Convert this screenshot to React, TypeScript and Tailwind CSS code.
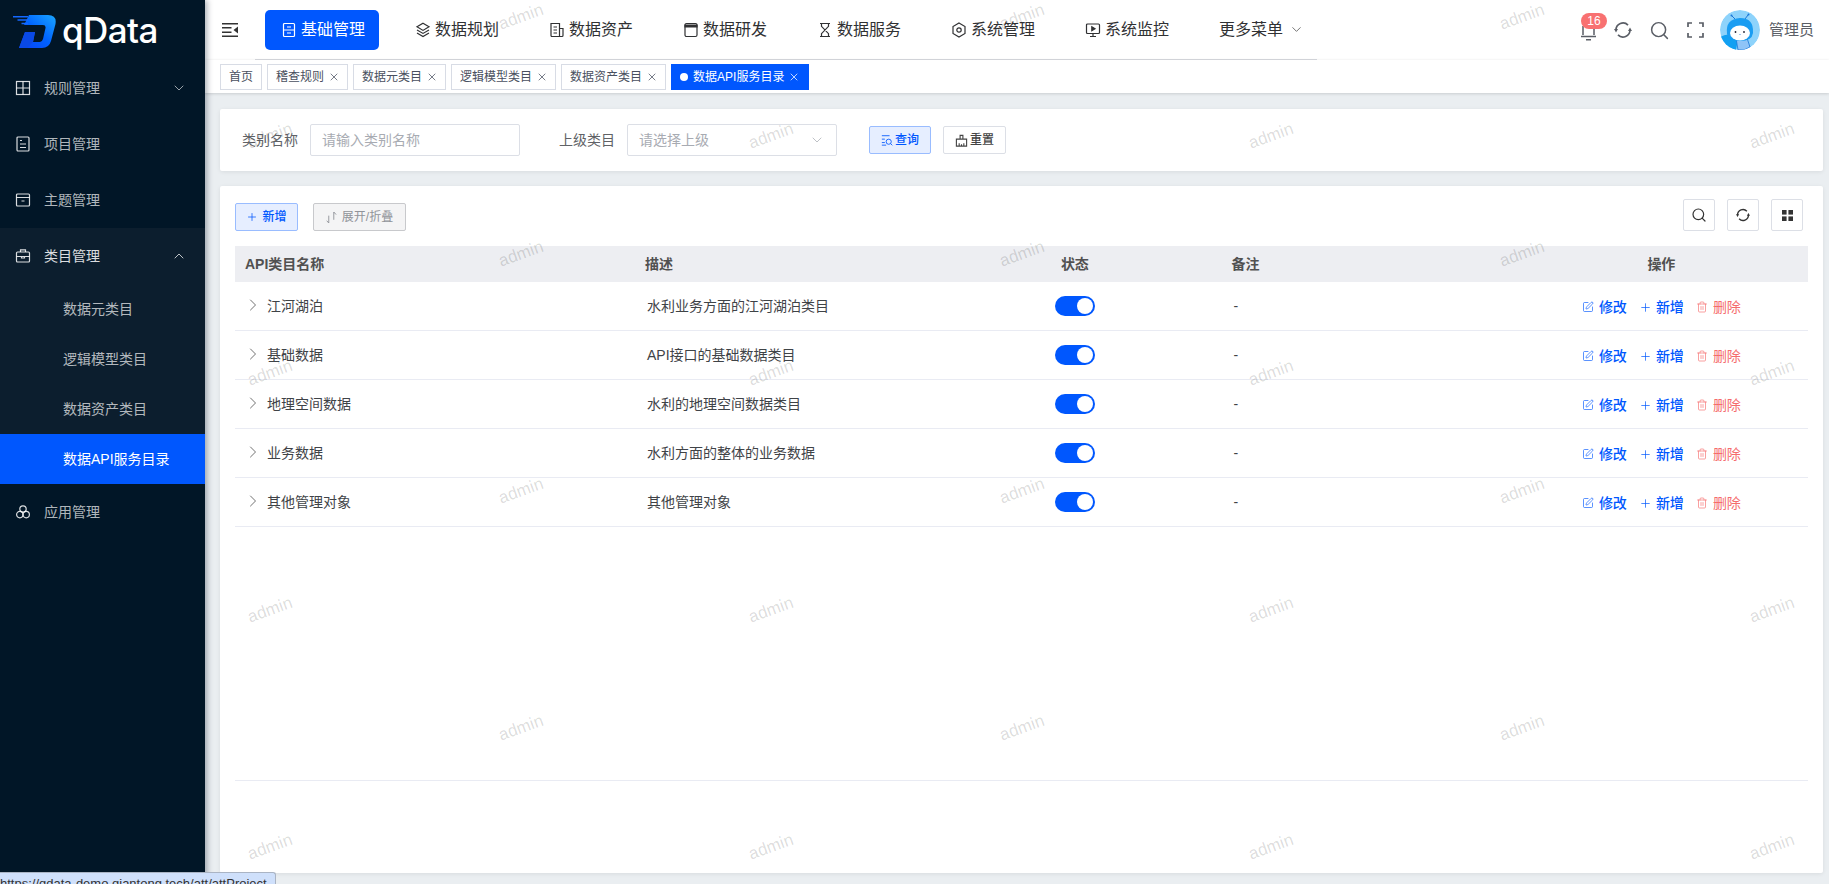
import { ChevronDown, ChevronRight, ChevronUp, Plus, Search, SquarePen, Trash2, X } from 'lucide-react';
import type { ReactNode } from 'react';

type IconProps = { className?: string };

const Svg = ({ className, children }: IconProps & { children: ReactNode }) => (
  <svg viewBox="0 0 16 16" fill="none" stroke="currentColor" strokeWidth="1.2" className={className}>
    {children}
  </svg>
);

const GridIcon = ({ className }: IconProps) => (
  <Svg className={className}>
    <rect x="1.500" y="1.500" width="13" height="13" />
    <path d="M8 1.500v13M1.500 8h13" />
  </Svg>
);
const DocIcon = ({ className }: IconProps) => (
  <Svg className={className}>
    <rect x="2" y="1" width="12" height="14" rx="1" />
    <path d="M5 4.500h2M5 8h6M5 11.500h6" />
  </Svg>
);
const BoxIcon = ({ className }: IconProps) => (
  <Svg className={className}>
    <rect x="1.500" y="2" width="13" height="12" rx="1" />
    <path d="M1.500 5.500h13M6.500 9h3" />
  </Svg>
);
const CaseIcon = ({ className }: IconProps) => (
  <Svg className={className}>
    <rect x="1.500" y="4" width="13" height="10" rx="1" />
    <path d="M5.500 4V1.800h5V4M1.500 8.500h13M6.500 8.500v1.500h3V8.500" />
  </Svg>
);
const AppIcon = ({ className }: IconProps) => (
  <Svg className={className}>
    <circle cx="8" cy="5" r="3.200" />
    <circle cx="4.800" cy="10.600" r="3.200" />
    <circle cx="11.200" cy="10.600" r="3.200" />
  </Svg>
);
const BaseIcon = ({ className }: IconProps) => (
  <Svg className={className}>
    <rect x="2.500" y="1.500" width="11" height="13" rx="1" />
    <path d="M2.500 8h11M6 5h4M6 11h4" />
  </Svg>
);
const LayerIcon = ({ className }: IconProps) => (
  <Svg className={className}>
    <path d="M8 1.200 14 4.800 8 8.400 2 4.800Z" />
    <path d="M2 8 8 11.400 14 8M2 11 8 14.600 14 11" />
  </Svg>
);
const AssetIcon = ({ className }: IconProps) => (
  <Svg className={className}>
    <path d="M2 1.500h8.500v13H3a1 1 0 0 1-1-1Z" />
    <path d="M10.500 6.500h3.500v7a1 1 0 0 1-1 1h-2.500M4.500 5h3.500M4.500 8h3.500M4.500 11h3.500" />
  </Svg>
);
const DevIcon = ({ className }: IconProps) => (
  <Svg className={className}>
    <rect x="2" y="1.500" width="12" height="13" rx="1.500" />
    <path d="M2 3h12v2H2Z" fill="currentColor" />
  </Svg>
);
const GlassIcon = ({ className }: IconProps) => (
  <Svg className={className}>
    <path d="M3 1.500h10M3 14.500h10M4.500 1.500v2.800L11.500 11.700v2.800M11.500 1.500v2.800L4.500 11.700v2.800" />
  </Svg>
);
const HexIcon = ({ className }: IconProps) => (
  <Svg className={className}>
    <path d="M8 1 14 4.500v7L8 15 2 11.500v-7Z" />
    <circle cx="8" cy="8" r="2.200" />
  </Svg>
);
const MonitorIcon = ({ className }: IconProps) => (
  <Svg className={className}>
    <rect x="1.500" y="2" width="13" height="9.500" rx="1" />
    <path d="M8 11.500V14M5 14.500h6" />
    <path d="M6.800 4.800 10 6.800 6.800 8.700Z" fill="currentColor" />
  </Svg>
);
const CollapseIcon = ({ className }: IconProps) => (
  <svg viewBox="0 0 16 14" fill="currentColor" className={className}>
    <path d="M0 0h16v1.500H0ZM0 4h9.500v1.500H0ZM0 8.500h9.500V10H0ZM0 12.500h16V14H0ZM16 3.500v7L11.500 7Z" />
  </svg>
);
const BellIcon = ({ className }: IconProps) => (
  <svg viewBox="0 0 17 18" fill="none" stroke="currentColor" strokeWidth="1.500" className={className}>
    <path d="M3 3v9M14 3v9M1 13.500h15M6 16.800h5" />
  </svg>
);
const RefreshIcon = ({ className }: IconProps) => (
  <svg viewBox="0 0 18 18" fill="none" stroke="currentColor" strokeWidth="1.700" className={className}>
    <path d="M14 4.100A7 7 0 0 0 2 9M4 13.900A7 7 0 0 0 16 9" />
    <path d="M0 8h4l-2 3.500ZM18 10h-4l2-3.500Z" fill="currentColor" stroke="none" />
  </svg>
);
const FullIcon = ({ className }: IconProps) => (
  <svg viewBox="0 0 17 16" fill="none" stroke="currentColor" strokeWidth="1.700" className={className}>
    <path d="M1 5V1h4M12 1h4v4M16 11v4h-4M5 15H1v-4" />
  </svg>
);
const FourIcon = ({ className }: IconProps) => (
  <svg viewBox="0 0 12 12" fill="currentColor" className={className}>
    <rect width="5" height="5" />
    <rect x="7" width="5" height="5" />
    <rect y="7" width="5" height="5" />
    <rect x="7" y="7" width="5" height="5" />
  </svg>
);
const ExpandIcon = ({ className }: IconProps) => (
  <svg viewBox="0 0 12 14" fill="none" stroke="currentColor" strokeWidth="1" className={className}>
    <path d="M3 13V5M3 13 .8 10.500M8.500 1v8.500M8.500 1l2.500 2.800" />
  </svg>
);
const QueryIcon = ({ className }: IconProps) => (
  <svg viewBox="0 0 14 14" fill="none" stroke="currentColor" strokeWidth="1" className={className}>
    <path d="M1 2h9M1 6h3.500M1 10h3.500M1 13h5" />
    <circle cx="9" cy="9" r="3" />
    <path d="m11.200 11.200 2 2" />
  </svg>
);
const BroomIcon = ({ className }: IconProps) => (
  <svg viewBox="0 0 14 14" fill="none" stroke="currentColor" strokeWidth="1.200" className={className}>
    <path d="M5.500 5V1.500h3V5M1.500 5.500h11v7.500h-11ZM4.500 13v-3M7 13v-2M9.500 13v-3" />
  </svg>
);

const Logo = () => (
  <svg viewBox="0 0 44 33" className="w-[44px] h-[33px]">
    <defs>
      <linearGradient id="logoD" x1="0" y1="1" x2="1" y2="0">
        <stop offset="0" stopColor="#0a3ff0" />
        <stop offset="0.5" stopColor="#0063ff" />
        <stop offset="1" stopColor="#1aa6ff" />
      </linearGradient>
    </defs>
    <path
      d="M12 10 17 0H36Q45 0 43.500 9L39 26Q37 33 30 33H7L13 17H23L21 27H28Q30 27 31 24L33.500 13Q34 10 31 10Z"
      fill="url(#logoD)"
    />
    <path d="M13 17H23L21 27 15 33H7Z" fill="#0a49e6" />
    <path d="M1 1h15v1.500H1ZM5.500 4.300H16v1.500H5.500ZM9.500 7.700H16v1.500H9.500Z" fill="#1468ff" />
  </svg>
);

const Avatar = () => (
  <svg viewBox="0 0 40 40" className="w-[40px] h-[40px] rounded-full">
    <circle cx="20" cy="20" r="20" fill="#8ed3fb" />
    <path d="M0 27q10-6 18 2l-2 11H8Q2 36 0 27Z" fill="#12a0f2" />
    <path d="M16 28h11l3 9-6 3h-6Z" fill="#8fc4f7" stroke="#1976d8" strokeWidth="0.800" />
    <path d="M12 6l3 3M28 5l-3 4" stroke="#1976d8" strokeWidth="1" />
    <circle cx="11.500" cy="5.500" r="1" fill="#1976d8" />
    <circle cx="28.500" cy="4.500" r="1" fill="#1976d8" />
    <path d="M7 24Q5 9 20 8q14 0 13 15-1 8-13 8T7 24Z" fill="#1a9df2" />
    <ellipse cx="20" cy="23" rx="10" ry="7.500" fill="#fff" />
    <circle cx="15.500" cy="22" r="0.900" fill="#223" />
    <circle cx="24" cy="22" r="0.900" fill="#223" />
    <path d="M19.500 24.500h1" stroke="#1976d8" strokeWidth="0.800" />
  </svg>
);

const menuTop = [
  { label: '规则管理', Icon: GridIcon, chevron: true },
  { label: '项目管理', Icon: DocIcon },
  { label: '主题管理', Icon: BoxIcon },
];
const subMenu = ['数据元类目', '逻辑模型类目', '数据资产类目', '数据API服务目录'];

const navItems = [
  { label: '基础管理', Icon: BaseIcon, active: true },
  { label: '数据规划', Icon: LayerIcon },
  { label: '数据资产', Icon: AssetIcon },
  { label: '数据研发', Icon: DevIcon },
  { label: '数据服务', Icon: GlassIcon },
  { label: '系统管理', Icon: HexIcon },
  { label: '系统监控', Icon: MonitorIcon },
];

const tabs = ['稽查规则', '数据元类目', '逻辑模型类目', '数据资产类目'];

const rows = [
  { name: '江河湖泊', desc: '水利业务方面的江河湖泊类目' },
  { name: '基础数据', desc: 'API接口的基础数据类目' },
  { name: '地理空间数据', desc: '水利的地理空间数据类目' },
  { name: '业务数据', desc: '水利方面的整体的业务数据' },
  { name: '其他管理对象', desc: '其他管理对象' },
];

// watermark tiles repeat in a staggered pattern over the whole page
const watermarks = Array.from({ length: 8 }).flatMap((_, row) =>
  Array.from({ length: 4 }).map((_, col) => ({
    x: (row % 2 === 0 ? 521 : 270) + col * 500.600,
    y: 17 + row * 118.500,
  })),
);

function Sidebar() {
  return (
    <aside className="relative z-20 w-[205px] shrink-0 h-full bg-[#011627] shadow-[2px_0_6px_rgba(0,21,41,0.35)] text-sm text-white/70">
      <div className="h-[60px] flex items-start pl-[12px] pt-[15px]">
        <Logo />
        <span className="ml-[6px] text-[35px] leading-none font-medium text-white font-['Inter',sans-serif] tracking-[-0.6px] -mt-[2px]">
          qData
        </span>
      </div>
      {menuTop.map(({ label, Icon, chevron }) => (
        <div key={label} className="h-[56px] flex items-center pl-[15px] pr-[18px]">
          <Icon className="w-[16px] h-[16px] text-white/85" />
          <span className="ml-[13px]">{label}</span>
          {chevron && <ChevronDown className="ml-auto w-[16px] h-[16px]" strokeWidth={1.300} />}
        </div>
      ))}
      <div className="bg-[#0c1e2e]">
        <div className="h-[56px] flex items-center pl-[15px] pr-[18px] text-white/85">
          <CaseIcon className="w-[16px] h-[16px]" />
          <span className="ml-[13px]">类目管理</span>
          <ChevronUp className="ml-auto w-[16px] h-[16px]" strokeWidth={1.300} />
        </div>
        {subMenu.map((label, i) => (
          <div
            key={label}
            className={
              i === 3
                ? 'h-[50px] flex items-center pl-[63px] bg-[#0057fe] text-white'
                : 'h-[50px] flex items-center pl-[63px]'
            }
          >
            {label}
          </div>
        ))}
      </div>
      <div className="h-[56px] flex items-center pl-[15px]">
        <AppIcon className="w-[16px] h-[16px] text-white/85" />
        <span className="ml-[13px]">应用管理</span>
      </div>
    </aside>
  );
}

function Header() {
  return (
    <header className="h-[60px] shrink-0 flex items-center bg-white shadow-[0_1px_4px_rgba(0,21,41,0.06)] relative z-0">
      <CollapseIcon className="ml-[17px] w-[16px] h-[14px] text-[#333]" />
      <nav className="ml-[17px] h-[60px] pl-[10px] flex items-center gap-[20px] border-b border-[#d9dbe0] text-base text-[#303133]">
        {navItems.map(({ label, Icon, active }) => (
          <div
            key={label}
            className={
              active
                ? 'w-[114px] h-[40px] flex items-center gap-[4px] pl-[16px] rounded-[5px] bg-[#0057fe] text-white'
                : 'w-[114px] h-[40px] flex items-center gap-[4px] pl-[16px]'
            }
          >
            <Icon className="w-[16px] h-[16px]" />
            <span>{label}</span>
          </div>
        ))}
        <div className="w-[114px] h-[40px] flex items-center pl-[16px]">
          <span>更多菜单</span>
          <ChevronDown className="ml-[6px] w-[15px] h-[15px] text-[#555]" strokeWidth={1.300} />
        </div>
      </nav>
      <div className="ml-auto flex items-center pr-[15px] text-[#5a5e66]">
        <div className="relative w-[17px] h-[18px] mr-[17px] mt-[3px]">
          <BellIcon className="w-[17px] h-[18px]" />
          <span className="absolute -top-[10px] left-[1px] w-[26px] h-[16px] rounded-full bg-[#f87171] text-white text-xs leading-[16px] text-center">
            16
          </span>
        </div>
        <RefreshIcon className="w-[18px] h-[18px] mr-[18px]" />
        <Search className="w-[21px] h-[21px] -ml-[1px] mr-[17px]" strokeWidth={1.700} />
        <FullIcon className="w-[17px] h-[16px] mr-[16px]" />
        <Avatar />
        <span className="ml-[9px] text-[15px] text-[#5a5e66]">管理员</span>
      </div>
    </header>
  );
}

function TabBar() {
  return (
    <div className="h-[33px] shrink-0 flex items-center gap-[5px] pl-[15px] bg-white shadow-[0_1px_3px_rgba(0,0,0,0.12),0_0_3px_rgba(0,0,0,0.04)] text-xs text-[#495060] relative">
      <div className="h-[26px] flex items-center px-[8px] border border-[#d8dce5]">首页</div>
      {tabs.map((t) => (
        <div key={t} className="h-[26px] flex items-center pl-[8px] pr-[7px] border border-[#d8dce5]">
          {t}
          <X className="ml-[4px] w-[12px] h-[12px]" strokeWidth={1.500} />
        </div>
      ))}
      <div className="h-[26px] flex items-center pl-[8px] pr-[8px] bg-[#0057fe] border border-[#0057fe] text-white">
        <span className="w-[8px] h-[8px] rounded-full bg-white mr-[5px]" />
        数据API服务目录
        <X className="ml-[4px] w-[12px] h-[12px]" strokeWidth={1.500} />
      </div>
    </div>
  );
}

function SearchCard() {
  return (
    <div className="h-[62px] shrink-0 flex items-center pl-[22px] bg-white rounded-[2px] shadow-[0_1px_4px_rgba(0,0,0,0.08)] text-sm">
      <span className="w-[56px] text-[#606266]">类别名称</span>
      <div className="ml-[12px] w-[210px] h-[32px] flex items-center px-[11px] border border-[#dcdfe6] rounded-[2px] text-[#a8abb2]">
        请输入类别名称
      </div>
      <span className="ml-[39px] w-[56px] text-[#606266]">上级类目</span>
      <div className="ml-[12px] w-[210px] h-[32px] flex items-center pl-[11px] pr-[11px] border border-[#dcdfe6] rounded-[2px] text-[#a8abb2]">
        请选择上级
        <ChevronDown className="ml-auto w-[16px] h-[16px] text-[#b4b7bd]" strokeWidth={1.300} />
      </div>
      <button className="ml-[32px] w-[62px] h-[28px] flex items-center justify-center gap-[2px] border border-[#99bcff] bg-[#e6eeff] rounded-[2px] text-xs font-medium text-[#0057fe]">
        <QueryIcon className="w-[12px] h-[12px]" />
        查询
      </button>
      <button className="ml-[12px] w-[63px] h-[28px] flex items-center justify-center gap-[2px] border border-[#dcdfe6] rounded-[2px] text-xs font-medium text-[#444]">
        <BroomIcon className="w-[13px] h-[13px]" />
        重置
      </button>
    </div>
  );
}

function Toggle() {
  return (
    <span className="inline-flex ml-[1px] -translate-y-[1px] w-[40px] h-[20px] rounded-full bg-[#0057fe] items-center justify-end pr-[2px] align-middle">
      <span className="w-[16px] h-[16px] rounded-full bg-white" />
    </span>
  );
}

function TableCard() {
  return (
    <div className="flex-1 min-h-0 px-[15px] pt-[13px] bg-white rounded-[2px] shadow-[0_1px_4px_rgba(0,0,0,0.08)]">
      <div className="h-[32px] flex items-end text-xs">
        <button className="w-[63px] h-[28px] flex items-center justify-center gap-[4px] border border-[#99bcff] bg-[#e6eeff] rounded-[2px] font-medium text-[#0057fe]">
          <Plus className="w-[12px] h-[12px]" strokeWidth={1.500} />
          新增
        </button>
        <button className="ml-[15px] w-[93px] h-[28px] flex items-center justify-center gap-[5px] border border-[#c8c9cc] bg-[#f4f4f5] rounded-[2px] text-[#909399]">
          <ExpandIcon className="w-[11px] h-[13px]" />
          展开/折叠
        </button>
        <div className="ml-auto flex gap-[12px] pr-[5px] text-[#333]">
          <div className="w-[32px] h-[32px] flex items-center justify-center border border-[#dcdfe6] rounded-[2px]">
            <Search className="w-[16px] h-[16px]" strokeWidth={1.800} />
          </div>
          <div className="w-[32px] h-[32px] flex items-center justify-center border border-[#dcdfe6] rounded-[2px]">
            <RefreshIcon className="w-[14px] h-[14px]" />
          </div>
          <div className="w-[32px] h-[32px] flex items-center justify-center border border-[#dcdfe6] rounded-[2px]">
            <FourIcon className="w-[11px] h-[11px]" />
          </div>
        </div>
      </div>
      <table className="mt-[15px] w-full table-fixed border-separate border-spacing-0 text-sm text-[#3f4347]">
        <colgroup>
          <col className="w-[400px]" />
        </colgroup>
        <thead>
          <tr className="h-[36px] bg-[#edeef2] text-left text-[#515151]">
            <th className="pl-[10px] font-bold">API类目名称</th>
            <th className="pl-[10px] font-bold">描述</th>
            <th className="text-center font-bold">状态</th>
            <th className="pl-[10px] font-bold">备注</th>
            <th className="text-center font-bold">操作</th>
          </tr>
        </thead>
        <tbody>
          {rows.map((r) => (
            <tr key={r.name} className="h-[49px]">
              <td className="pl-[8px] border-b border-[#e9ebf3]">
                <div className="flex items-center">
                  <ChevronRight className="w-[20px] h-[20px] -mt-[2px] text-[#555]" strokeWidth={1} />
                  <span className="ml-[4px]">{r.name}</span>
                </div>
              </td>
              <td className="pl-[12px] border-b border-[#e9ebf3]">{r.desc}</td>
              <td className="text-center border-b border-[#e9ebf3]">
                <Toggle />
              </td>
              <td className="pl-[12px] border-b border-[#e9ebf3]">-</td>
              <td className="border-b border-[#e9ebf3]">
                <div className="flex items-center justify-center pt-[2px] text-sm font-medium text-[#0057fe]">
                  <SquarePen className="w-[12px] h-[12px]" strokeWidth={1.300} />
                  <span className="ml-[5px]">修改</span>
                  <Plus className="ml-[12px] w-[13px] h-[13px]" strokeWidth={1.300} />
                  <span className="ml-[4px]">新增</span>
                  <Trash2 className="ml-[12px] w-[12px] h-[12px] text-[#f56c6c]" strokeWidth={1.300} />
                  <span className="ml-[5px] font-normal text-[#f56c6c]">删除</span>
                </div>
              </td>
            </tr>
          ))}
        </tbody>
      </table>
      <div className="h-[254px] border-b border-[#e9ebf3]" />
    </div>
  );
}

export default function App() {
  return (
    <div className="relative flex h-screen w-full overflow-hidden bg-[#eaeef1] font-['Liberation_Sans','Noto_Sans_CJK_SC',sans-serif]">
      <Sidebar />
      <main className="flex-1 min-w-0 flex flex-col">
        <Header />
        <TabBar />
        <div className="flex-1 min-h-0 flex flex-col gap-[15px] pt-[16px] pl-[15px] pr-[6px] pb-[11px]">
          <SearchCard />
          <TableCard />
        </div>
      </main>
      <div className="absolute inset-0 z-10 pointer-events-none overflow-hidden">
        {watermarks.map((w) => (
          <span
            key={`${w.x}-${w.y}`}
            className="absolute -translate-x-1/2 -translate-y-1/2 -rotate-[20deg] text-[17px] text-black/15"
            style={{ left: w.x, top: w.y }}
          >
            admin
          </span>
        ))}
      </div>
      <div className="absolute left-0 bottom-0 z-30 w-[276px] h-[12px] overflow-hidden bg-[#cfe0fb] border-t border-r border-[#aab4c4] rounded-tr-[3px] pt-[4px] text-[13px] leading-none text-[#333] whitespace-nowrap">
        https://qdata-demo.qiantong.tech/att/attProject
      </div>
    </div>
  );
}
